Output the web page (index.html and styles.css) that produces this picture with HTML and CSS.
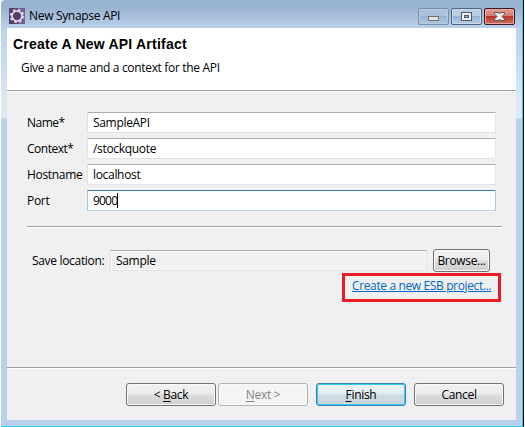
FILE: index.html
```html
<!DOCTYPE html>
<html lang="en">
<head>
<meta charset="utf-8">
<title>New Synapse API</title>
<link rel="stylesheet" href="styles.css">
</head>
<body>
<div class="window">
  <div class="titlebar">
    <svg class="app-icon" width="16" height="16" viewBox="0 0 16 16">
      <rect width="16" height="16" fill="#54406f"/>
      <rect x="9" width="7" height="16" fill="#745d91"/>
      <circle cx="8" cy="8" r="6.3" fill="none" stroke="#d5cfdd" stroke-width="2" stroke-dasharray="2.5 2.45"/>
      <circle cx="8" cy="8" r="5" fill="#5b4a73" stroke="#e6e3ea" stroke-width="1.6"/>
      <path d="M5 6h6M4 8h8M5 10h6" stroke="#47355e"/>
    </svg>
    <span class="title">New Synapse API</span>
    <div class="controls">
      <span class="ctl ctl-min"><svg width="31" height="17"><rect x="10.5" y="8.5" width="10" height="4" fill="#e4e4df" stroke="#6d7178"/></svg></span>
      <span class="ctl"><svg width="31" height="17"><rect x="10.5" y="4.5" width="10" height="8" fill="#f1f1ef" stroke="#535768"/><rect x="13.500" y="7.500" width="4" height="2" fill="#86afd8" stroke="#535768"/></svg></span>
      <span class="ctl ctl-close"><svg width="31" height="17"><path d="M10.500 4.500h4l1 1.500 1-1.500h4v1.500l-2.500 2.500 2.500 2.500v1.500h-4l-1-1.500-1 1.500h-4v-1.500l2.500-2.500-2.500-2.500z" fill="#f0f0ef" stroke="#595568"/></svg></span>
    </div>
  </div>
  <div class="client">
    <header class="banner">
      <h1>Create A New API Artifact</h1>
      <p>Give a name and a context for the API</p>
    </header>
    <main class="content">
      <div class="form">
        <span class="t-name">Name*</span><div class="field"><span>SampleAPI</span></div>
        <span class="t-context">Context*</span><div class="field"><span>/stockquote</span></div>
        <span>Hostname</span><div class="field"><span>localhost</span></div>
        <span>Port</span><div class="field focused"><span class="t-num">9000</span><i class="caret"></i></div>
      </div>
      <div class="rule"></div>
      <div class="location">
        <span class="t-save">Save location:</span>
        <div class="field readonly"><span>Sample</span></div>
        <div class="btn browse"><span>Browse...</span></div>
      </div>
      <div class="highlight"><a class="t-link">Create a new ESB project...</a></div>
    </main>
    <footer class="footer">
      <div class="btn back"><span>&lt; <u>B</u>ack</span></div>
      <div class="btn disabled"><span><u>N</u>ext &gt;</span></div>
      <div class="btn default"><span><u>F</u>inish</span></div>
      <div class="btn"><span>Cancel</span></div>
    </footer>
  </div>
</div>
</body>
</html>
```
FILE: styles.css
```css
* { box-sizing: border-box; }
body { margin: 0; width: 525px; height: 427px; overflow: hidden; background: #fff; font: 12px/16px "Open Sans", "Noto Sans", sans-serif; color: #000; white-space: nowrap; letter-spacing: -0.32px; }
.window { width: 523px; height: 427px; margin-left: 1px; padding: 0 6px 6px; border-right: 1px solid #000; border-bottom: 1px solid #2bd0e8; box-shadow: inset -1px 0 #29d0ee; background: linear-gradient(#99b4d1 0, #99b4d1 8px, #b9d1ea 28px, #dce8f5 100px, #dce8f5 118px, #b9d1ea 119px); border-top-left-radius: 4px; }
.titlebar { height: 28px; display: flex; align-items: flex-start; padding: 8px 2px 0; }
.app-icon { flex: none; }
.title { margin-left: 4px; }
.controls { display: flex; gap: 2px; margin-left: auto; }
.ctl { width: 31px; height: 17px; border: 1px solid #52627f; border-radius: 2px; box-shadow: inset 0 0 0 1px #c8daec; background: linear-gradient(#bacde2 0 45%, #98b4d2 50%, #b5cde6); display: flex; overflow: hidden; }
.ctl svg { flex: none; margin: -1px; }
.ctl-min { border-color: #7791ad; box-shadow: inset 0 0 0 1px #b5cce3; background: linear-gradient(#aac2dc 0 45%, #9ab6d3 50%, #adc7e1); }
.ctl-close { border-color: #431422; box-shadow: inset 0 0 0 1px #e5aaa5; background: linear-gradient(#e49c91 0, #d87e70 45%, #b93621 50%, #d3705f); }
.client { width: 509px; height: 392px; background: #f0f0f0; display: flex; flex-direction: column; }
.banner { height: 62px; background: #fff; padding: 8px 6px; flex: none; }
h1 { margin: 0; font: bold 14px/16px "Liberation Sans", Arial, sans-serif; letter-spacing: 0.22px; }
p { margin: 8px 0 0 8px; letter-spacing: -0.32px; }
.content { border-top: 1px solid #a0a0a0; box-shadow: inset 0 1px #fff; height: 277px; padding: 21px 14px 0 20px; }
.form { display: grid; grid-template-columns: 60px 409px; grid-auto-rows: 21px; row-gap: 5px; align-items: center; }
.t-name { letter-spacing: -0.5px; }
.t-context { letter-spacing: -0.5px; }
.t-num { letter-spacing: -0.8px; }
.field { height: 21px; border: 1px solid #e2e3ea; border-top-color: #abadb3; border-radius: 1px; background: #fff; padding: 1px 5px; display: flex; align-items: center; }
.focused { border-color: #a4c9e3; border-top-color: #3d7bad; border-bottom-color: #b7d9ed; }
.caret { width: 1px; height: 15px; background: #000; }
.rule { height: 2px; margin-top: 15px; background: linear-gradient(#a0a0a0 50%, #fff 50%); }
.location { display: flex; align-items: center; height: 23px; margin: 21px 0 0 5px; }
.t-save { width: 78px; }
.readonly { width: 317px; background: #f0f0f0; box-shadow: inset 0 0 0 1px #f8f8f8; margin-right: 6px; }
.btn { width: 90px; height: 23px; border: 1px solid #707070; border-radius: 3px; box-shadow: inset 0 0 0 1px #fafafa; background: linear-gradient(#f2f2f2 0, #ebebeb 49%, #dddddd 51%, #cfcfcf); display: flex; align-items: center; justify-content: center; }
.browse { width: 57px; }
.highlight { width: 159px; height: 29px; margin: 1px 0 0 315px; border: 3px solid #ed1c24; padding: 2px 7px; }
.t-link { color: #0066cc; text-decoration: underline; letter-spacing: -0.37px; }
.footer { height: 53px; border-top: 1px solid #a0a0a0; box-shadow: inset 0 1px #fff; padding: 15px 12px 0 0; display: flex; justify-content: flex-end; gap: 8px; }
.back { margin-right: -6px; }
.disabled { color: #838383; border-color: #adb2b5; background: #f4f4f4; }
.default { border-color: #3c7fb1; box-shadow: inset 0 0 0 1px #35cdf5; background: linear-gradient(#edf3f5 0, #e2ebee 49%, #cfdde3 51%, #c9d4d9); }
u { text-underline-offset: 2px; }
```
